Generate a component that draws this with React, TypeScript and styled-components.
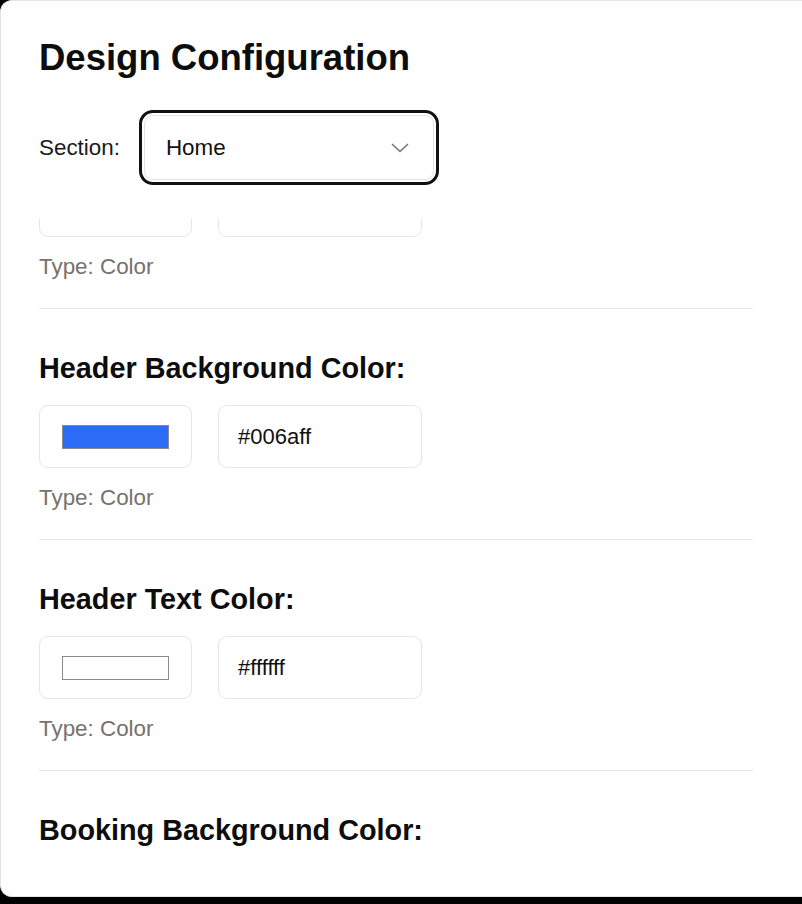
import React, { useLayoutEffect, useRef } from "react";
import styled, { createGlobalStyle } from "styled-components";

const GlobalStyle = createGlobalStyle`
  html, body {
    margin: 0;
    padding: 0;
    background: #000;
    overflow: hidden;
  }
  * { box-sizing: border-box; }
`;

const Card = styled.div`
  width: 802px;
  height: 897px;
  background: #fff;
  border: 1px solid #e4e4e4;
  border-right: none;
  border-radius: 12px 0 0 12px;
  padding: 35px 49px 35px 38px;
  display: flex;
  flex-direction: column;
  font-family: "Liberation Sans", Arial, Helvetica, sans-serif;
  color: #111;
  overflow: hidden;
`;

const Header = styled.header`
  flex: none;
  padding-bottom: 39px;
  background: #fff;
`;

const Title = styled.h1`
  margin: 0;
  font-size: 36.5px;
  line-height: 43px;
  font-weight: 700;
  color: #0d0d0d;
`;

const SectionRow = styled.div`
  margin-top: 36px;
  display: flex;
  align-items: center;
  gap: 24px;
  height: 65px;
`;

const Label = styled.span`
  font-size: 22.4px;
  color: #1a1a1a;
`;

const SelectBox = styled.div`
  width: 290px;
  height: 65px;
  border: 1px solid #e2e2e2;
  border-radius: 9px;
  padding: 0 24px 0 21px;
  display: flex;
  align-items: center;
  justify-content: space-between;
  font-size: 22.4px;
  color: #111;
  outline: 3px solid #111;
  outline-offset: 2px;
`;

const Scroller = styled.div`
  flex: 1;
  min-height: 0;
  overflow: hidden;
`;

const Item = styled.section`
  padding: 42px 0 29px;
  border-bottom: 1px solid #e6e6e6;
`;

const Heading = styled.h2`
  margin: 0 0 20px;
  font-size: 28.8px;
  line-height: 34px;
  font-weight: 700;
  color: #0d0d0d;
`;

const InputsRow = styled.div`
  display: flex;
  gap: 26px;
`;

const FieldBox = styled.div<{ $w: number }>`
  width: ${(p) => p.$w}px;
  height: 63px;
  border: 1px solid #e6e6e6;
  border-radius: 9px;
  display: flex;
  align-items: center;
`;

const ColorBox = styled(FieldBox)`
  justify-content: center;
`;

const TextBox = styled(FieldBox)`
  padding-left: 19px;
  font-size: 22px;
  color: #111;
`;

const Swatch = styled.div<{ $c: string }>`
  width: 107px;
  height: 24px;
  background: ${(p) => p.$c};
  border: 1px solid #8c8c8c;
`;

const TypeText = styled.div`
  margin-top: 17px;
  font-size: 22.4px;
  line-height: 25px;
  color: #78716c;
`;

const Chevron = () => (
  <svg width="18" height="10" viewBox="0 0 18 10" fill="none">
    <polyline points="1.5,1.5 9,8.5 16.5,1.5" stroke="#7a7a7a" strokeWidth="1.7" strokeLinecap="round" strokeLinejoin="round" />
  </svg>
);

const items = [
  { name: "Background Color:", value: "#ffffff", swatch: "#ffffff" },
  { name: "Header Background Color:", value: "#006aff", swatch: "#2b6cf6" },
  { name: "Header Text Color:", value: "#ffffff", swatch: "#ffffff" },
  { name: "Booking Background Color:", value: "#ffffff", swatch: "#ffffff" },
  { name: "Booking Text Color:", value: "#000000", swatch: "#000000" },
];

export default function App() {
  const ref = useRef<HTMLDivElement>(null);
  useLayoutEffect(() => {
    if (ref.current) ref.current.scrollTop = 141;
  }, []);
  return (
    <>
      <GlobalStyle />
      <Card>
        <Header>
          <Title>Design Configuration</Title>
          <SectionRow>
            <Label>Section:</Label>
            <SelectBox role="combobox" aria-expanded="false">
              <span>Home</span>
              <Chevron />
            </SelectBox>
          </SectionRow>
        </Header>
        <Scroller ref={ref}>
          {items.map((it) => (
            <Item key={it.name}>
              <Heading>{it.name}</Heading>
              <InputsRow>
                <ColorBox $w={153}>
                  <Swatch $c={it.swatch} />
                </ColorBox>
                <TextBox $w={204}>{it.value}</TextBox>
              </InputsRow>
              <TypeText>Type: Color</TypeText>
            </Item>
          ))}
        </Scroller>
      </Card>
    </>
  );
}
